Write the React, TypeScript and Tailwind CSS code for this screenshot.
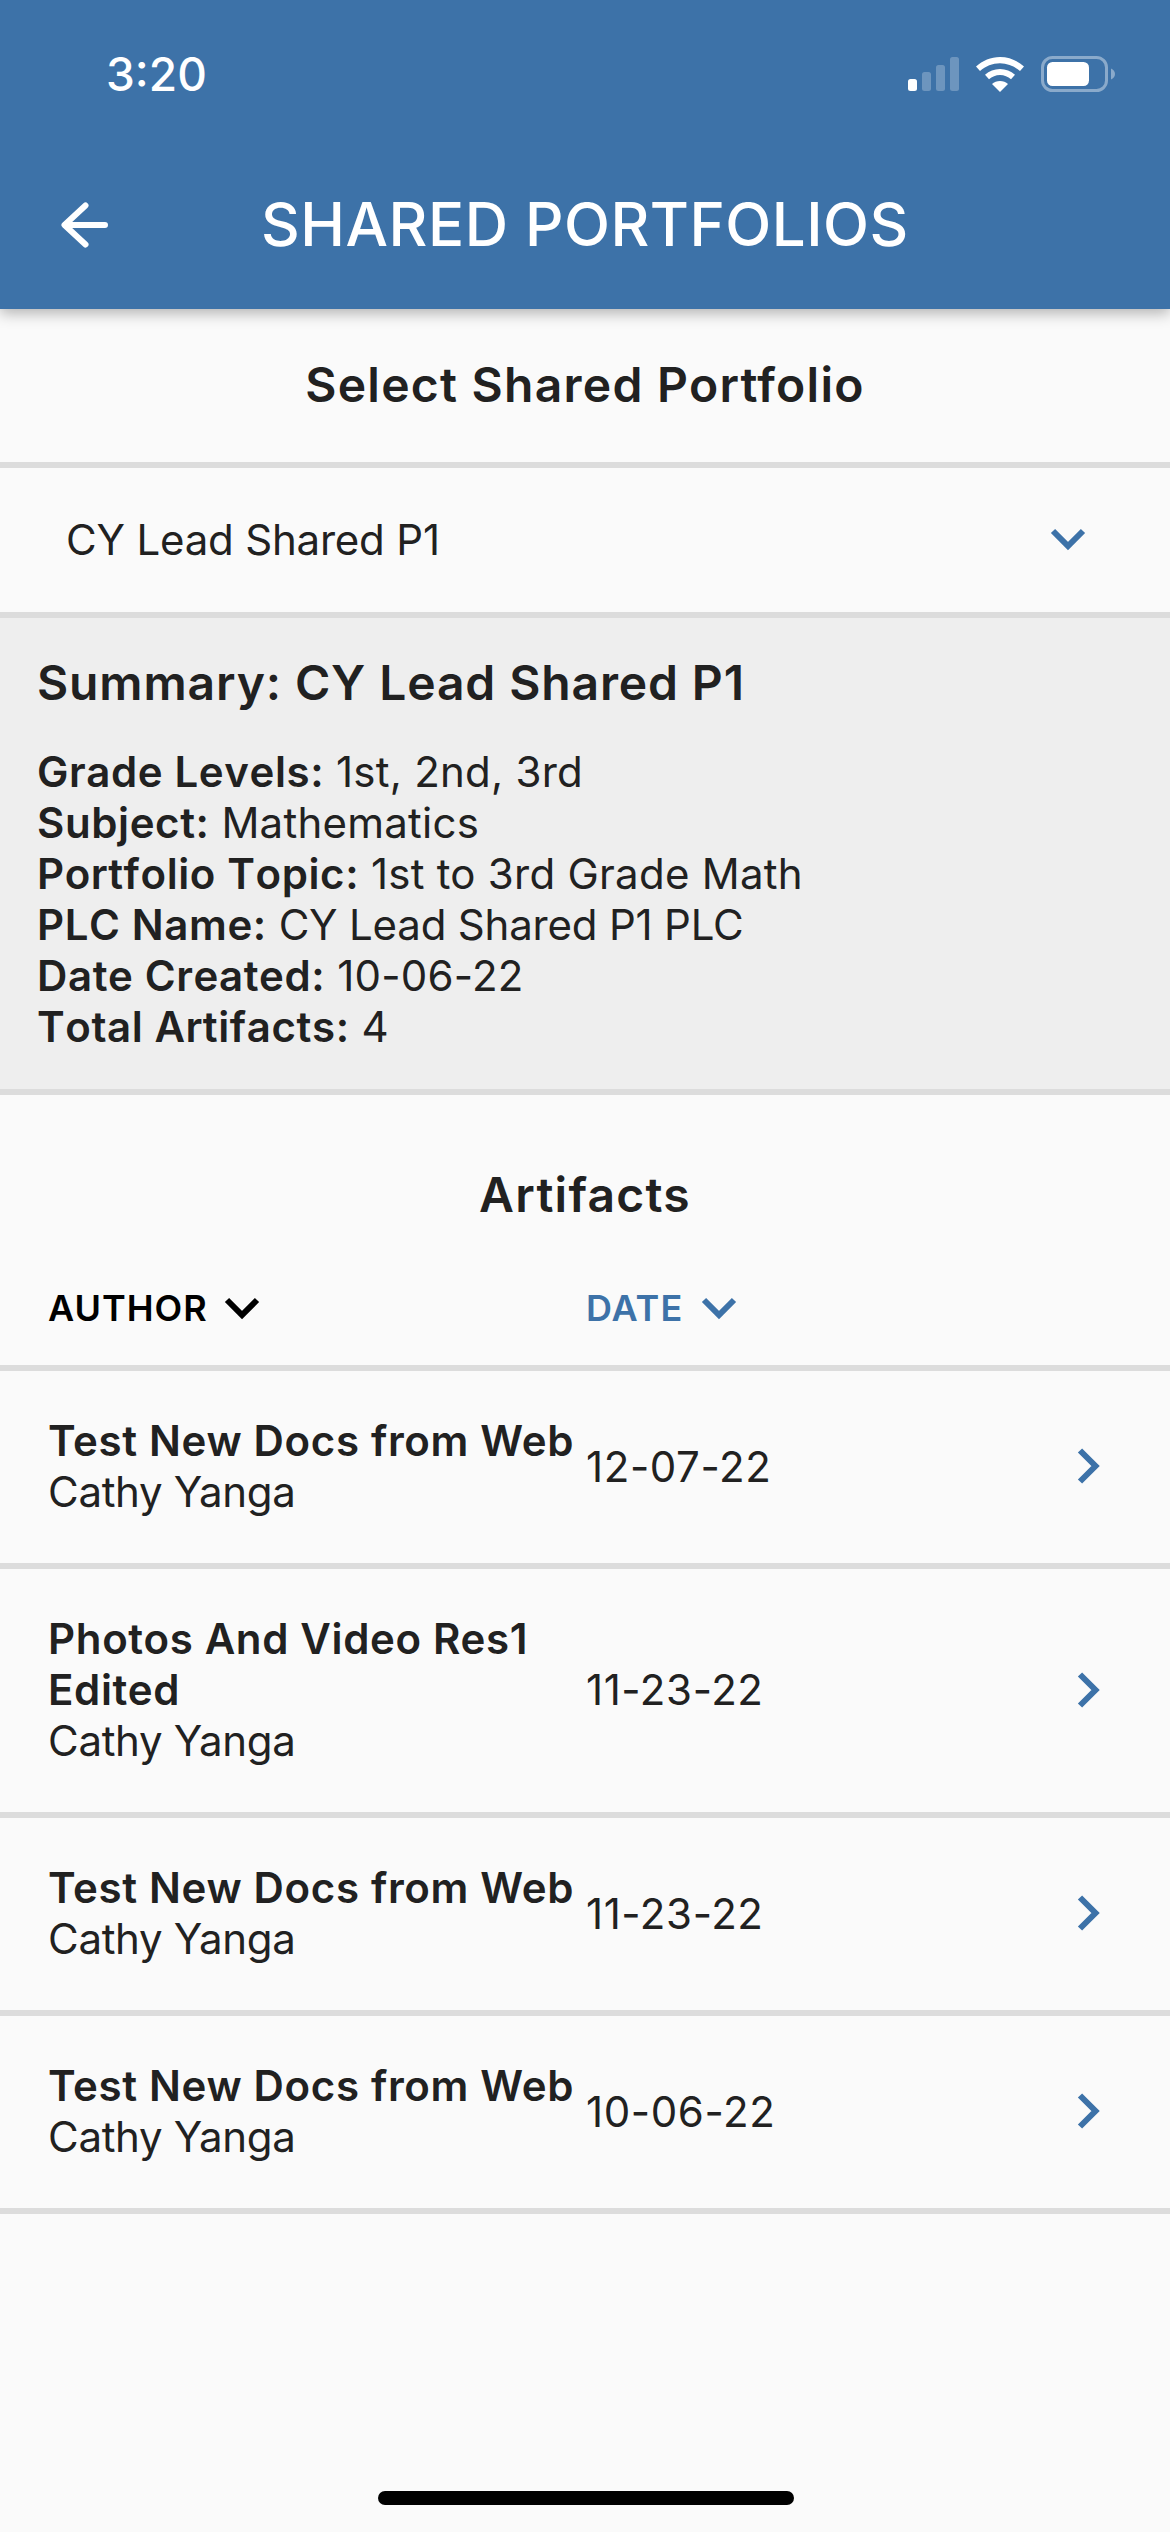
const artifacts = [
  { title: ['Test New Docs from Web'], author: 'Cathy Yanga', date: '12-07-22' },
  { title: ['Photos And Video Res1', 'Edited'], author: 'Cathy Yanga', date: '11-23-22' },
  { title: ['Test New Docs from Web'], author: 'Cathy Yanga', date: '11-23-22' },
  { title: ['Test New Docs from Web'], author: 'Cathy Yanga', date: '10-06-22' },
];

const summary = [
  { label: 'Grade Levels:', value: '1st, 2nd, 3rd', valueClass: 'tracking-[0.25px]' },
  { label: 'Subject:', value: 'Mathematics', valueClass: 'tracking-[0.25px]' },
  { label: 'Portfolio Topic:', value: '1st to 3rd Grade Math', valueClass: 'tracking-[0.25px]' },
  { label: 'PLC Name:', value: 'CY Lead Shared P1 PLC', valueClass: 'tracking-[-0.2px]' },
  { label: 'Date Created:', value: '10-06-22', valueClass: 'tracking-[0.25px]' },
  { label: 'Total Artifacts:', value: '4', valueClass: 'tracking-[0.25px]' },
];

const StatusIcons = () => (
  <div className="flex items-center gap-[17px]">
    <svg width="51" height="34" viewBox="0 0 51 34">
      <rect x="0" y="22" width="9" height="12" rx="2.5" fill="#fff" />
      <rect x="14" y="15" width="9" height="19" rx="2.5" fill="#fff" fillOpacity="0.25" />
      <rect x="28" y="8" width="9" height="26" rx="2.5" fill="#fff" fillOpacity="0.25" />
      <rect x="42" y="0" width="9" height="34" rx="2.5" fill="#fff" fillOpacity="0.25" />
    </svg>
    <svg width="48" height="35" viewBox="0 0 48 35">
      <path d="M24 0C14.8 0 6.6 3.6 0 9.5l4 4.6C9.6 9.1 16.4 6.2 24 6.2s14.4 2.9 20 7.9l4-4.6C41.4 3.6 33.2 0 24 0z" fill="#fff" />
      <path d="M24 12c-5.700 0-10.800 2.200-15 5.800l4 4.500c3-2.600 6.800-4.200 11-4.200s8 1.600 11 4.200l4-4.500C34.800 14.200 29.700 12 24 12z" fill="#fff" />
      <path d="M24 24c-3.100 0-5.900 1.200-8 3l8 8 8-8c-2.100-1.800-4.900-3-8-3z" fill="#fff" />
    </svg>
    <svg width="74" height="36" viewBox="0 0 74 36">
      <rect x="1.500" y="1.500" width="64" height="33" rx="10" fill="none" stroke="#fff" strokeOpacity="0.4" strokeWidth="3" />
      <rect x="6" y="6" width="42" height="24" rx="5.500" fill="#fff" />
      <path d="M70 12.500c2.500 1 4 3 4 5.500s-1.500 4.500-4 5.500z" fill="#fff" fillOpacity="0.4" />
    </svg>
  </div>
);

const ChevronDown = ({ color }: { color: string }) => (
  <svg width="36" height="24" viewBox="0 0 36 24">
    <path d="M3 4l15 15L33 4" fill="none" stroke={color} strokeWidth="6" />
  </svg>
);

export default function App() {
  return (
    <div className="relative flex min-h-[2532px] w-[1170px] flex-col bg-[#fafafa] font-['Inter',sans-serif] text-[42px] leading-[51px] text-[#212121]">
      <header className="z-10 flex h-[309px] flex-col bg-[#3d72a8] shadow-[0_4px_14px_rgba(0,0,0,0.3)]">
        <div className="flex items-center justify-between pl-[106px] pr-[55px] pt-[50px]">
          <span className="text-[46px] leading-[48px] font-medium text-white">3:20</span>
          <StatusIcons />
        </div>
        <div className="relative mt-[101px] flex items-center justify-center">
          <svg width="47" height="46" viewBox="0 0 47 46" fill="none" className="absolute left-[61px] top-[3px]">
            <path d="M44 23H4M24.500 3.500L3.500 23l21 19.500" stroke="#fff" strokeWidth="6" strokeLinecap="round" strokeLinejoin="round" />
          </svg>
          <h1 className="text-[60px] leading-[50px] font-medium tracking-[0.5px] text-white">SHARED PORTFOLIOS</h1>
        </div>
      </header>

      <div className="flex h-[153px] items-center justify-center pb-[2px] text-[48px] font-semibold tracking-[1.26px]">Select Shared Portfolio</div>
      <div className="h-[6px] bg-[#dcdcdc]" />

      <div className="flex h-[144px] items-center justify-between pb-[2px] pl-[66px] pr-[84px] tracking-[-0.2px]">
        <span>CY Lead Shared P1</span>
        <ChevronDown color="#3d72a8" />
      </div>
      <div className="h-[6px] bg-[#dcdcdc]" />

      <section className="h-[471px] bg-[#eeeeee] px-[37px] pt-[36px]">
        <h2 className="mb-[34px] text-[48px] leading-[58px] font-semibold tracking-[0.87px]">Summary: CY Lead Shared P1</h2>
        {summary.map((row) => (
          <div key={row.label}>
            <span className="font-semibold tracking-[0.6px] [font-kerning:none]">{row.label}</span>{' '}
            <span className={row.valueClass}>{row.value}</span>
          </div>
        ))}
      </section>
      <div className="h-[6px] bg-[#dcdcdc]" />

      <section className="h-[270px]">
        <h2 className="pt-[71px] text-center text-[48px] leading-[58px] font-semibold tracking-[1.25px]">Artifacts</h2>
        <div className="mt-[62px] flex text-[36px] leading-[44px] font-semibold tracking-[1px]">
          <div className="flex w-[586px] items-center gap-[16px] pl-[48px] text-black">
            AUTHOR
            <ChevronDown color="#000" />
          </div>
          <div className="flex items-center gap-[18px] text-[#3d72a8]">
            DATE
            <ChevronDown color="#3d72a8" />
          </div>
        </div>
      </section>
      <div className="h-[6px] bg-[#dcdcdc]" />

      {artifacts.map((a, i) => (
        <div key={i}>
          <div className="flex items-center pb-[46px] pt-[44px]">
            <div className="w-[586px] pl-[48px]">
              {a.title.map((line) => (
                <div key={line} className="font-semibold tracking-[0.66px] whitespace-nowrap">{line}</div>
              ))}
              <div className="tracking-[-0.3px]">{a.author}</div>
            </div>
            <div className="flex-1 tracking-[0.6px]">{a.date}</div>
            <svg width="24" height="36" viewBox="0 0 24 36" className="mr-[70px]">
              <path d="M4 2.500L19.500 18 4 33.500" fill="none" stroke="#3d72a8" strokeWidth="6" />
            </svg>
          </div>
          <div className="h-[6px] bg-[#dcdcdc]" />
        </div>
      ))}

      <div className="absolute bottom-[27px] left-[378px] h-[14px] w-[416px] rounded-full bg-black" />
    </div>
  );
}
